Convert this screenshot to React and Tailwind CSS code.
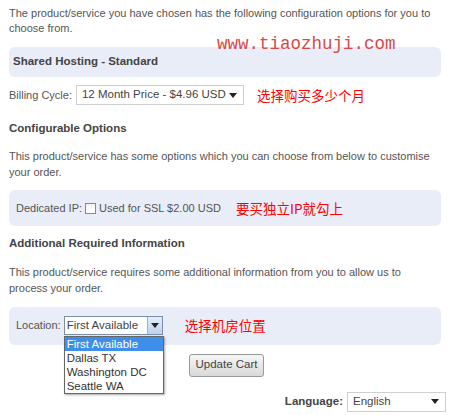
import React from 'react';

const font = { fontFamily: '"Liberation Sans", "Noto Sans CJK SC", sans-serif' };

function Arrow() {
  return (
    <svg width="8" height="5" viewBox="0 0 8 5" className="shrink-0">
      <path d="M0 0 H8 L4 5 Z" fill="#222" />
    </svg>
  );
}

function FakeSelect({ value, className }) {
  return (
    <div className={`flex items-center justify-between bg-white border border-[#cfcfcf] pl-[5px] pr-[6px] h-[20px] text-[11.5px] text-[#444] ${className}`}>
      <span className="whitespace-nowrap">{value}</span>
      <Arrow />
    </div>
  );
}

function Note({ children, className }) {
  return (
    <span className={`text-[#f00] text-[13.5px] whitespace-nowrap font-['Noto_Sans_CJK_SC',sans-serif] ${className}`}>{children}</span>
  );
}

export default function App() {
  return (
    <div className="relative w-[450px] h-[415px] bg-white text-[#555] text-[11px] px-[9px] pt-[6px] overflow-hidden whitespace-nowrap" style={font}>
      <p className="leading-[15px]">
        The product/service you have chosen has the following configuration options for you to<br />choose from.
      </p>

      <div className="absolute left-[217px] top-[34px] text-[17.5px] leading-[20px] text-[#d94848] font-['Liberation_Mono',monospace]">www.tiaozhuji.com</div>

      <div className="mt-[11px] h-[30px] rounded-[6px] bg-[#e8edf7] flex items-center px-[4px] font-bold text-[11.5px] text-[#444]">
        Shared Hosting - Standard
      </div>

      <div className="mt-[8px] flex items-center h-[20px]">
        <span>Billing Cycle:</span>
        <FakeSelect value="12 Month Price - $4.96 USD" className="ml-[4px] w-[168px]" />
        <Note className="ml-[13px]">选择购买多少个月</Note>
      </div>

      <div className="mt-[15px] font-bold text-[11.5px] text-[#444]">Configurable Options</div>

      <p className="mt-[11px] leading-[16px]">
        This product/service has some options which you can choose from below to customise<br />your order.
      </p>

      <div className="mt-[10px] h-[36px] rounded-[6px] bg-[#e8edf7] flex items-center px-[7px]">
        <span>Dedicated IP:</span>
        <span className="ml-[3px] w-[11px] h-[11px] border border-[#888] bg-gradient-to-b from-[#f4f4f4] to-white" />
        <span className="ml-[3px]">Used for SSL $2.00 USD</span>
        <Note className="ml-[15px]">要买独立IP就勾上</Note>
      </div>

      <div className="mt-[9px] font-bold text-[11.5px] text-[#444]">Additional Required Information</div>

      <p className="mt-[11px] leading-[16px]">
        This product/service requires some additional information from you to allow us to<br />process your order.
      </p>

      <div className="mt-[11px] h-[38px] rounded-[6px] bg-[#e8edf7] flex items-center px-[7px]">
        <span>Location:</span>
        <div className="relative ml-[3px]">
          <div className="flex items-stretch w-[99px] h-[19px] bg-white border border-[#7a8ea8] text-[11.5px] text-[#444]">
            <span className="flex-1 pl-[2px] leading-[17px]">First Available</span>
            <span className="w-[15px] flex items-center justify-center border-l border-[#9bb0cc] bg-gradient-to-b from-[#e4eefb] to-[#bcd2ee]">
              <Arrow />
            </span>
          </div>
          <div className="absolute left-0 top-[20px] w-[100px] bg-white border border-[#666] shadow-[1px_1px_2px_rgba(0,0,0,0.35)] text-[11.5px] text-[#333] leading-[14px] z-10">
            <div className="bg-[#3d8fe9] text-white px-[2px]">First Available</div>
            <div className="px-[2px]">Dallas TX</div>
            <div className="px-[2px]">Washington DC</div>
            <div className="px-[2px]">Seattle WA</div>
          </div>
        </div>
        <Note className="ml-[22px]">选择机房位置</Note>
      </div>

      <div className="mt-[9px] flex justify-center pl-[3px]">
        <button className="h-[23px] px-[5px] rounded-[3px] border border-[#999] bg-gradient-to-b from-[#f6f6f6] to-[#d9d9d9] text-[11.5px] text-[#444]">Update Cart</button>
      </div>

      <div className="mt-[15px] flex items-center justify-end -mr-[5px]">
        <span className="font-bold text-[11.5px] text-[#444]">Language:</span>
        <FakeSelect value="English" className="ml-[4px] w-[99px]" />
      </div>
    </div>
  );
}
